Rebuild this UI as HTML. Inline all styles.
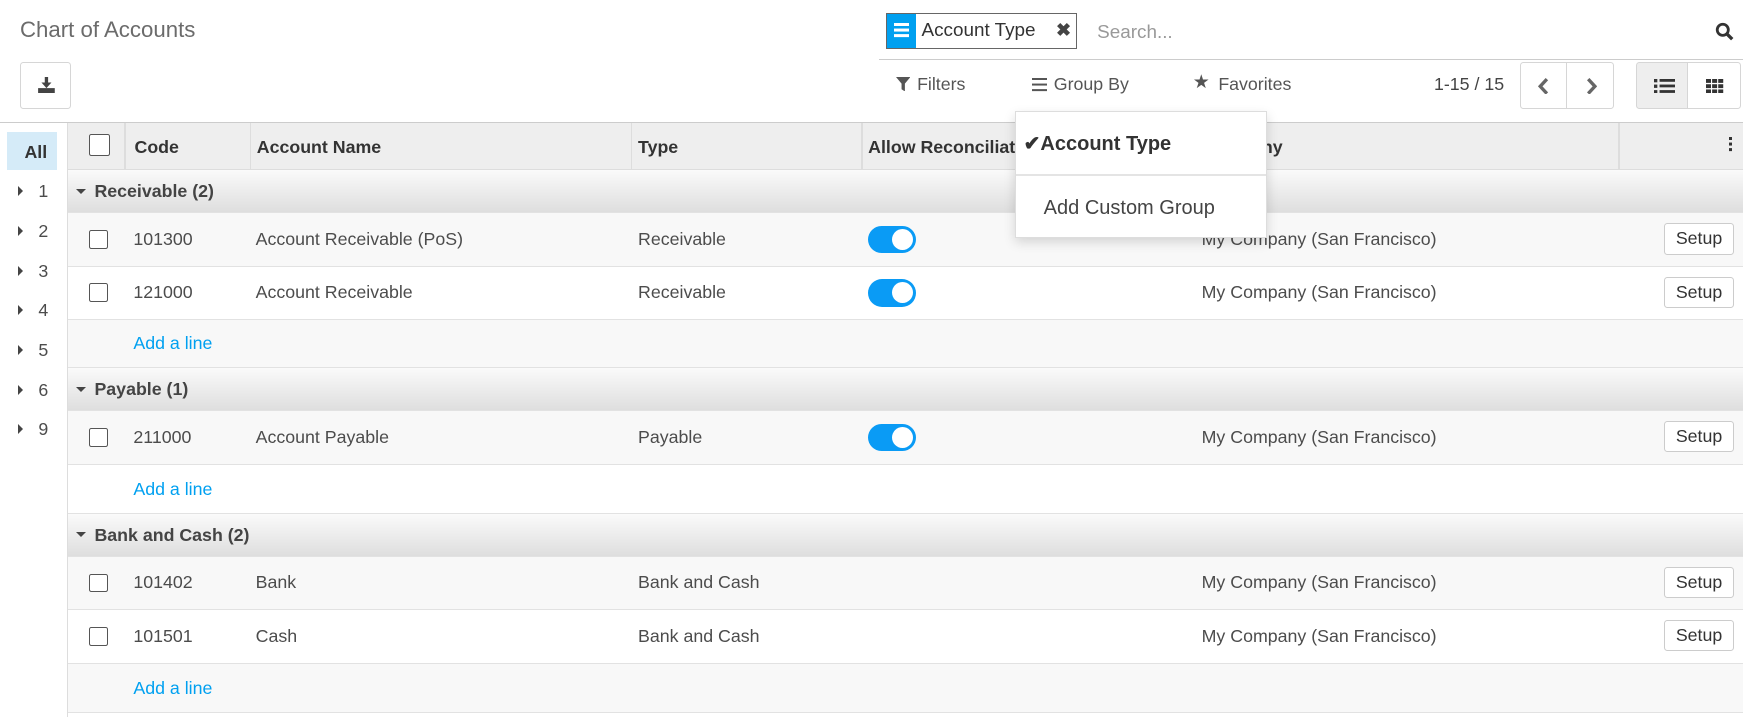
<!DOCTYPE html>
<html><head><meta charset="utf-8"><style>
html,body{margin:0;padding:0;background:#fff;overflow:hidden;width:1743px;height:717px}
#w{zoom:1.1116;position:relative;width:1568px;height:645px;font-family:"Liberation Sans",sans-serif;color:#4c4c4c;font-size:16px}
.a{position:absolute}
.btn{position:absolute;border:1px solid #d6d6d6;border-radius:3px;background:#fff;box-sizing:border-box}
.row{position:absolute;left:61px;width:1507px;border-bottom:1px solid #e2e2e2;box-sizing:border-box}
.g{background:linear-gradient(#fafafa,#dedede);font-weight:bold;color:#444}
.cb{position:absolute;left:19px;width:17px;height:17px;border:1px solid #555;border-radius:2px;box-sizing:border-box;background:#fff}
.tg{position:absolute;left:720px;width:43px;height:25px;border-radius:13px;background:#0a9bf5}
.tg:after{content:"";position:absolute;right:3px;top:3px;width:19px;height:19px;border-radius:50%;background:#fff}
.su{position:absolute;left:1436px;width:63px;height:28px;border:1px solid #ccc;border-radius:3px;background:#fff;box-sizing:border-box;text-align:center;line-height:26px;font-size:16px;color:#333}
.t{position:absolute}
.sb{position:absolute;left:0;font-size:16px}
.car{display:inline-block;width:0;height:0;border-top:5px solid transparent;border-bottom:5px solid transparent;border-left:5px solid #444;margin-right:14px;vertical-align:1px}
.dc{display:inline-block;width:0;height:0;border-left:5px solid transparent;border-right:5px solid transparent;border-top:5px solid #444;margin-right:8px;vertical-align:3px}
.add{color:#00a0f0}
</style></head><body><div id="w">
<div class="a" style="left:18px;top:15px;font-size:20px;color:#6b6b6b">Chart of Accounts</div>
<div class="btn" style="left:18px;top:56px;width:46px;height:42px">
<svg class="a" style="left:14px;top:12px" width="17" height="15" viewBox="0 0 17 15"><path d="M7 0h3v5h3l-4.5 5L4 5h3z" fill="#444"/><rect x="1" y="10" width="15" height="5" fill="#444"/></svg></div>
<div class="a" style="left:797px;top:12px;width:172px;height:32px;border:1px solid #666;box-sizing:border-box"></div>
<div class="a" style="left:798px;top:13px;width:26px;height:30px;background:#00a0f0">
<div class="a" style="left:6px;top:8px;width:14px;height:2px;background:#fff;box-shadow:0 5px #fff,0 10px #fff"></div></div>
<div class="a" style="left:829px;top:18px;font-size:17px;color:#333">Account Type</div>
<div class="a" style="left:950px;top:18px;font-size:16px;color:#444;font-weight:bold">✖</div>
<div class="a" style="left:987px;top:20px;font-size:17px;color:#999">Search...</div>
<div class="a" style="left:791px;top:53px;width:777px;height:1px;background:#ccc"></div>
<svg class="a" style="left:1543px;top:20px" width="17" height="17" viewBox="0 0 17 17"><circle cx="7" cy="7" r="5" fill="none" stroke="#333" stroke-width="2.5"/><path d="M10.5 10.5l5 5" stroke="#333" stroke-width="3"/></svg>
<svg class="a" style="left:806px;top:69px" width="13" height="13" viewBox="0 0 13 13"><path d="M0 0h13L8 6v7L5 11V6z" fill="#555"/></svg>
<div class="a" style="left:825px;top:67px;color:#555">Filters</div>
<div class="a" style="left:928px;top:70px;width:14px;height:2px;background:#555;box-shadow:0 5px #555,0 10px #555"></div>
<div class="a" style="left:948px;top:67px;color:#555">Group By</div>
<div class="a" style="left:1073px;top:64px;color:#555;font-size:17px">★</div>
<div class="a" style="left:1096px;top:67px;color:#555">Favorites</div>
<div class="a" style="left:1290px;top:67px;color:#444">1-15 / 15</div>
<div class="btn" style="left:1367px;top:56px;width:43px;height:42px;border-radius:3px 0 0 3px"><svg class="a" style="left:16px;top:13px" width="10" height="15"><path d="M8 1L2 7.5L8 14" fill="none" stroke="#666" stroke-width="3"/></svg></div>
<div class="btn" style="left:1409px;top:56px;width:43px;height:42px;border-radius:0 3px 3px 0"><svg class="a" style="left:17px;top:13px" width="10" height="15"><path d="M2 1L8 7.5L2 14" fill="none" stroke="#666" stroke-width="3"/></svg></div>
<div class="btn" style="left:1472px;top:56px;width:47px;height:42px;background:#eee;border-radius:3px 0 0 3px">
<svg class="a" style="left:15px;top:14px" width="19" height="13"><g fill="#333"><rect x="0" y="0" width="3" height="3"/><rect x="0" y="5" width="3" height="3"/><rect x="0" y="10" width="3" height="3"/><rect x="5" y="0" width="14" height="2.5"/><rect x="5" y="5" width="14" height="2.5"/><rect x="5" y="10" width="14" height="2.5"/></g></svg></div>
<div class="btn" style="left:1518px;top:56px;width:48px;height:42px;border-radius:0 3px 3px 0">
<svg class="a" style="left:16px;top:14px" width="16" height="13"><g fill="#333"><rect x="0" y="0" width="4.5" height="3.5"/><rect x="5.5" y="0" width="4.5" height="3.5"/><rect x="11" y="0" width="4.5" height="3.5"/><rect x="0" y="4.7" width="4.5" height="3.5"/><rect x="5.5" y="4.7" width="4.5" height="3.5"/><rect x="11" y="4.7" width="4.5" height="3.5"/><rect x="0" y="9.4" width="4.5" height="3.5"/><rect x="5.5" y="9.4" width="4.5" height="3.5"/><rect x="11" y="9.4" width="4.5" height="3.5"/></g></svg></div>
<div class="a" style="left:0;top:110px;width:1568px;height:1px;background:#ccc"></div>
<div class="a" style="left:60px;top:111px;width:1px;height:534px;background:#ddd"></div>
<div class="a" style="left:6px;top:119px;width:45px;height:34px;background:#d5ebf8"></div>
<div class="a" style="left:22px;top:128px;font-weight:bold;color:#333">All</div>
<div class="sb" style="left:16px;top:163px"><span class="car"></span>1</div>
<div class="sb" style="left:16px;top:199px"><span class="car"></span>2</div>
<div class="sb" style="left:16px;top:235px"><span class="car"></span>3</div>
<div class="sb" style="left:16px;top:270px"><span class="car"></span>4</div>
<div class="sb" style="left:16px;top:306px"><span class="car"></span>5</div>
<div class="sb" style="left:16px;top:342px"><span class="car"></span>6</div>
<div class="sb" style="left:16px;top:377px"><span class="car"></span>9</div>
<div class="row" style="top:111px;height:42px;background:#eee;border-bottom:1px solid #ddd;font-weight:bold;color:#333">
<div class="cb" style="top:10px;width:19px;height:19px"></div>
<div class="a" style="left:51px;top:0;width:1px;height:42px;background:#ddd"></div>
<div class="t" style="left:60px;top:12px">Code</div>
<div class="a" style="left:164px;top:0;width:1px;height:42px;background:#ddd"></div>
<div class="t" style="left:170px;top:12px">Account Name</div>
<div class="a" style="left:507px;top:0;width:1px;height:42px;background:#ddd"></div>
<div class="t" style="left:513px;top:12px">Type</div>
<div class="a" style="left:714px;top:0;width:1px;height:42px;background:#ddd"></div>
<div class="t" style="left:720px;top:12px">Allow Reconciliation</div>
<div class="t" style="left:1020px;top:12px">Company</div>
<div class="a" style="left:1395px;top:0;width:1px;height:42px;background:#ddd"></div>
<div class="a" style="left:1494px;top:12px;width:3px;height:3px;background:#333;box-shadow:0 5px #333,0 10px #333"></div>
</div>
<div class="row g" style="top:153px;height:39px"><div class="t" style="left:7px;top:10px"><span class="dc"></span>Receivable (2)</div></div>
<div class="row" style="top:192px;height:48px;background:#f8f8f8"><div class="cb" style="top:15px"></div><div class="t" style="left:59px;top:14px">101300</div><div class="t" style="left:169px;top:14px">Account Receivable (PoS)</div><div class="t" style="left:513px;top:14px">Receivable</div><div class="tg" style="top:11px"></div><div class="t" style="left:1020px;top:14px">My Company (San Francisco)</div><div class="su" style="top:9px">Setup</div></div>
<div class="row" style="top:240px;height:48px;background:#fff"><div class="cb" style="top:15px"></div><div class="t" style="left:59px;top:14px">121000</div><div class="t" style="left:169px;top:14px">Account Receivable</div><div class="t" style="left:513px;top:14px">Receivable</div><div class="tg" style="top:11px"></div><div class="t" style="left:1020px;top:14px">My Company (San Francisco)</div><div class="su" style="top:9px">Setup</div></div>
<div class="row" style="top:288px;height:43px;background:#f8f8f8"><div class="t add" style="left:59px;top:12px">Add a line</div></div>
<div class="row g" style="top:331px;height:39px"><div class="t" style="left:7px;top:10px"><span class="dc"></span>Payable (1)</div></div>
<div class="row" style="top:370px;height:48px;background:#f8f8f8"><div class="cb" style="top:15px"></div><div class="t" style="left:59px;top:14px">211000</div><div class="t" style="left:169px;top:14px">Account Payable</div><div class="t" style="left:513px;top:14px">Payable</div><div class="tg" style="top:11px"></div><div class="t" style="left:1020px;top:14px">My Company (San Francisco)</div><div class="su" style="top:9px">Setup</div></div>
<div class="row" style="top:418px;height:44px;background:#fff"><div class="t add" style="left:59px;top:13px">Add a line</div></div>
<div class="row g" style="top:462px;height:39px"><div class="t" style="left:7px;top:10px"><span class="dc"></span>Bank and Cash (2)</div></div>
<div class="row" style="top:501px;height:48px;background:#f8f8f8"><div class="cb" style="top:15px"></div><div class="t" style="left:59px;top:14px">101402</div><div class="t" style="left:169px;top:14px">Bank</div><div class="t" style="left:513px;top:14px">Bank and Cash</div><div class="t" style="left:1020px;top:14px">My Company (San Francisco)</div><div class="su" style="top:9px">Setup</div></div>
<div class="row" style="top:549px;height:48px;background:#fff"><div class="cb" style="top:15px"></div><div class="t" style="left:59px;top:14px">101501</div><div class="t" style="left:169px;top:14px">Cash</div><div class="t" style="left:513px;top:14px">Bank and Cash</div><div class="t" style="left:1020px;top:14px">My Company (San Francisco)</div><div class="su" style="top:9px">Setup</div></div>
<div class="row" style="top:597px;height:44px;background:#f8f8f8"><div class="t add" style="left:59px;top:13px">Add a line</div></div>
<div class="a" style="left:913px;top:100px;width:227px;height:114px;background:#fff;border:1px solid #ddd;box-sizing:border-box;box-shadow:0 4px 10px rgba(0,0,0,.15)">
<div class="a" style="left:7px;top:17px;font-size:18px;font-weight:bold;color:#333">✔Account Type</div>
<div class="a" style="left:0;top:56px;width:225px;height:1px;background:#e4e4e4"></div>
<div class="a" style="left:25px;top:76px;font-size:18px;color:#444">Add Custom Group</div>
</div>
</div></body></html>
